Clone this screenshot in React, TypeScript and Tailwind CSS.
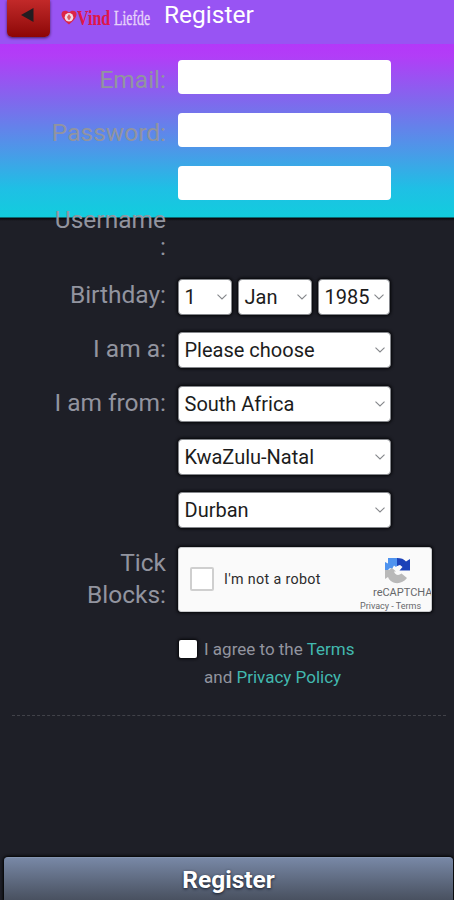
import { useState } from 'react';
import type { ReactNode } from 'react';

function Row({ label, className, labelClass, children }: { label?: ReactNode; className: string; labelClass?: string; children?: ReactNode }) {
  return (
    <div className={`flex items-start ${className}`}>
      <div className={`w-[166px] shrink-0 text-right text-[24.5px] text-[#92949f] ${labelClass ?? 'pt-1 leading-8'}`}>{label}</div>
      <div className="ml-3">{children}</div>
    </div>
  );
}

function Select({ value, className = 'w-[213px] pr-[5px]' }: { value: string; className?: string }) {
  return (
    <button
      type="button"
      className={`flex h-9 items-center justify-between rounded-[4px] border border-[#85878c] bg-white pl-[5.5px] text-left text-[20px] leading-9 whitespace-nowrap text-[#1c1c1c] shadow-[0_0_3px_1px_#050508] ${className}`}
    >
      <span>{value}</span>
      <svg className="h-[6px] w-[10px] shrink-0" viewBox="0 0 10 6" fill="none" stroke="#85878b" strokeWidth="1.1">
        <path d="M0.5 0.7 L5 5 L9.5 0.7" />
      </svg>
    </button>
  );
}

function Logo() {
  return (
    <div className="mt-[6px] ml-[11px] flex h-6 w-[92px] shrink-0 font-['Liberation_Serif',serif] text-[20px] leading-6">
      <svg className="h-6 w-4 shrink-0" viewBox="0 0 16 24">
        <path d="M8 18.5 C4 15 .5 12 .5 8 C.5 4.5 5.5 3.5 8 6.5 C10.5 3.5 15.5 4.5 15.5 8 C15.5 12 12 15 8 18.5Z" fill="#dc2447" />
        <circle cx="8" cy="11.2" r="4.3" fill="#f3dbe4" />
        <path d="M8 8 L10 11 L8.8 13.8 H7.2 L6 11Z" fill="#dc5b62" />
      </svg>
      <div className="w-[37px] shrink-0">
        <span className="inline-block origin-left scale-x-[0.8] font-bold text-[#df1747]">Vind</span>
      </div>
      <div className="w-[37px] shrink-0">
        <span className="inline-block origin-left scale-x-[0.69] text-[#e6d2fa] [-webkit-text-stroke:0.4px_#e6d2fa]">Liefde</span>
      </div>
    </div>
  );
}

function Captcha() {
  return (
    <div className="flex h-[65px] w-[254px] items-start overflow-hidden rounded-[3px] border border-[#c9cacd] bg-[#fafafa] text-[#2c2c2c] shadow-[0_0_3px_1px_#050508]">
      <div className="mt-[19px] ml-[11px] size-6 shrink-0 rounded-[2px] border-2 border-[#cfcfcf] bg-white" />
      <span className="mt-[20px] ml-[10px] w-[104px] shrink-0 text-[14.3px] leading-[22px] tracking-[0.35px] whitespace-nowrap">I'm not a robot</span>
      <div className="ml-[32px] flex w-[78px] shrink-0 flex-col pt-[9px] whitespace-nowrap text-[#66686b]">
        <svg className="ml-[24px] size-[27px]" viewBox="0 0 27 27">
          <path d="M1 13 V5 L4 6.5 V1 H14 V8 L12 10 L10 8.5 L8 12 L6 11 L4 13Z" fill="#4f93ee" />
          <path d="M13 1 C17 1 20 2 22 4.5 L26 2 V13.5 H15.5 L18.5 10 L16 8 L13 9Z" fill="#1c42b8" />
          <path d="M1 13 H5 L8 11 L12 14.5 H10 C11 18 14.5 19 17.5 16.5 L23 21 C18 28 7 28 4 20 L1 22Z" fill="#b9b9b9" />
        </svg>
        <span className="mt-[3px] ml-[13px] text-[11px] leading-[12px]">reCAPTCHA</span>
        <span className="mt-px text-[9px] leading-[12px]">Privacy - Terms</span>
      </div>
    </div>
  );
}

export default function App() {
  const [agreed, setAgreed] = useState(false);

  return (
    <div className="flex h-[900px] w-[454px] flex-col overflow-hidden bg-[#1e1f27] bg-[linear-gradient(#b438f9_44px,#b23df7_56px,#8068ed_101px,#4a9ae8_152px,#1fbfe5_188px,#12cddd_217px,#08090c_218px,#1e1f27_221px)] font-['Roboto',sans-serif]">
      <header className="flex h-11 shrink-0 items-start bg-[#9854f3] pl-[7px]">
        <button type="button" aria-label="Back" className="flex h-[37px] w-[43px] shrink-0 items-start justify-center rounded-b-[5px] bg-linear-to-b from-[#c22929] to-[#8d0505] pt-2 shadow-[0_1px_3px_#43205e]">
          <svg className="mr-[3px] h-[14px] w-[13px]" viewBox="0 0 13 14">
            <path d="M0 7 L12.5 0 V14Z" fill="#221d21" />
          </svg>
        </button>
        <Logo />
        <h1 className="ml-[11px] text-[24.5px] leading-[30px] text-white">Register</h1>
      </header>

      <form className="shrink-0 pt-4">
        <Row label="Email:" className="h-[53px]">
          <input type="email" className="block h-[34px] w-[213px] rounded-[4px] bg-white px-2 text-[20px]" />
        </Row>
        <Row label="Password:" className="h-[53px]">
          <input type="password" className="block h-[34px] w-[213px] rounded-[4px] bg-white px-2 text-[20px]" />
        </Row>
        <Row label={<>Username<br />:</>} className="h-[113px]" labelClass="pt-[40px] leading-[27px]">
          <input type="text" className="block h-[34px] w-[213px] rounded-[4px] bg-white px-2 text-[20px]" />
        </Row>
        <Row label="Birthday:" className="h-[53px]" labelClass="leading-8">
          <div className="flex">
            <Select value="1" className="w-[54px] pr-1" />
            <Select value="Jan" className="ml-1.5 w-[74px] pr-1" />
            <Select value="1985" className="ml-1.5 w-[72px] pr-[5px]" />
          </div>
        </Row>
        <Row label="I am a:" className="h-[54px]" labelClass="pt-px leading-8">
          <Select value="Please choose" />
        </Row>
        <Row label="I am from:" className="h-[53px]" labelClass="pt-px leading-8">
          <Select value="South Africa" />
        </Row>
        <Row className="h-[53px]">
          <Select value="KwaZulu-Natal" />
        </Row>
        <Row className="h-[55px]">
          <Select value="Durban" />
        </Row>
        <Row label={<>Tick<br />Blocks:</>} className="h-[88px]" labelClass="leading-8">
          <Captcha />
        </Row>
        <div className="ml-[179px] flex h-[80px] items-start">
          <input
            type="checkbox"
            aria-label="I agree"
            checked={agreed}
            onChange={(e) => setAgreed(e.target.checked)}
            className="mt-[5px] size-[18px] shrink-0 appearance-none rounded-[2px] bg-white shadow-[0_0_3px_1px_#050508] checked:bg-[#3fb5ac]"
          />
          <p className="ml-[7px] text-[17px] leading-7 whitespace-nowrap text-[#92949f]">
            I agree to the <a className="text-[#42b9af]">Terms</a>
            <br />
            and <a className="text-[#42b9af]">Privacy Policy</a>
          </p>
        </div>
        <hr className="mr-2 ml-3 border-0 border-t border-dashed border-[#414249]" />
      </form>

      <button
        type="button"
        className="mt-auto ml-1 h-[43px] w-[449px] shrink-0 rounded-t-[4px] border-t border-[#8494b0] bg-linear-to-b from-[#7888a6] to-[#495160] pt-px text-[24.5px] leading-[42px] font-bold text-white shadow-[0_0_3px_1px_#000] text-shadow-[0_1px_3px_#111827]"
      >
        Register
      </button>
    </div>
  );
}
